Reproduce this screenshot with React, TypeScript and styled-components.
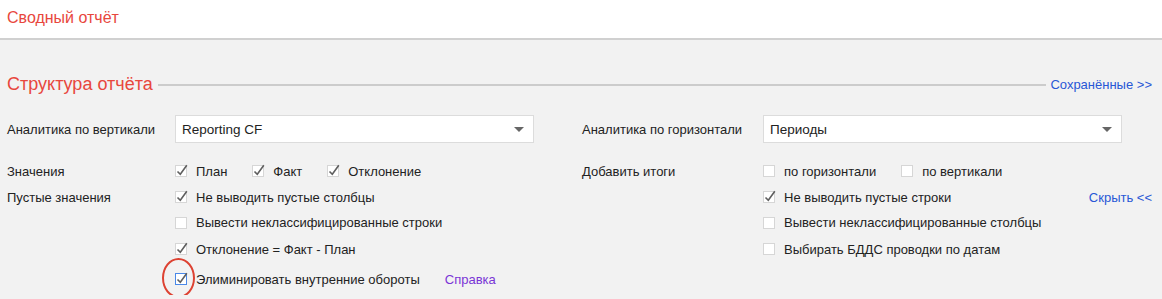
import React from 'react';
import styled, { createGlobalStyle } from 'styled-components';

const GlobalStyle = createGlobalStyle`
  body {
    margin: 0;
    background: #f2f2f2;
    font-family: "Liberation Sans", Arial, sans-serif;
    font-size: 13px;
    color: #222;
  }
`;

const Header = styled.header`
  height: 40px;
  box-sizing: border-box;
  background: #fff;
  border-bottom: 2px solid #d0d0d0;
  display: flex;
  align-items: center;
  padding: 0 7px;
`;

const PageTitle = styled.h1`
  margin: 0 0 3px;
  font-size: 16px;
  font-weight: normal;
  color: #e8473d;
`;

const Body = styled.main`
  padding: 33px 10px 0 7px;
`;

const Legend = styled.div`
  display: flex;
  align-items: center;
  height: 22px;
`;

const SectionTitle = styled.h2`
  margin: 0;
  font-size: 18px;
  font-weight: normal;
  color: #e8473d;
`;

const Rule = styled.div`
  flex: 1;
  height: 2px;
  background: #cccccc;
  margin: 2px 4px 0 5px;
`;

const Link = styled.a<{ $visited?: boolean }>`
  color: ${(p) => (p.$visited ? '#7a35d6' : '#2857d6')};
  text-decoration: none;
  cursor: pointer;
  white-space: nowrap;
`;

const Grid = styled.div`
  display: grid;
  grid-template-columns: 168px 407px 181px 1fr;
  grid-template-rows: 43px 26px 26px 25px 28px 32px;
  margin-top: 20px;
`;

const Label = styled.div<{ $top?: boolean }>`
  display: flex;
  align-items: center;
  align-self: ${(p) => (p.$top ? 'start' : 'stretch')};
  height: ${(p) => (p.$top ? '28px' : 'auto')};
`;

const Controls = styled.div<{ $spread?: boolean; $top?: boolean }>`
  display: flex;
  align-items: center;
  gap: 25px;
  align-self: ${(p) => (p.$top ? 'start' : 'stretch')};
  justify-content: ${(p) => (p.$spread ? 'space-between' : 'flex-start')};
`;

const Select = styled.div`
  width: 359px;
  height: 28px;
  box-sizing: border-box;
  background: #fff;
  border: 1px solid #dcdcdc;
  display: flex;
  align-items: center;
  justify-content: space-between;
  padding: 0 9px 0 6px;
  font-size: 13.5px;
`;

const Arrow = styled.span`
  width: 0;
  height: 0;
  border-left: 5px solid transparent;
  border-right: 5px solid transparent;
  border-top: 5px solid #666;
`;

const Item = styled.label`
  position: relative;
  display: inline-flex;
  align-items: center;
  white-space: nowrap;
`;

const Box = styled.span<{ $focus?: boolean }>`
  position: relative;
  width: 12px;
  height: 12px;
  box-sizing: border-box;
  background: #fff;
  border: 1px solid ${(p) => (p.$focus ? '#4a88e8' : '#d6d6d6')};
  margin-right: 9px;
  flex: none;

  svg {
    position: absolute;
    left: 0;
    top: -2px;
    overflow: visible;
  }
`;

const Mark = styled.span`
  position: absolute;
  left: -13px;
  top: 50%;
  width: 33px;
  height: 40px;
  margin-top: -21px;
  box-sizing: border-box;
  border: 2.5px solid #dd4232;
  border-radius: 50%;
  pointer-events: none;
`;

const Check: React.FC<{ checked?: boolean; focus?: boolean; circled?: boolean; children: React.ReactNode }> = ({
  checked,
  focus,
  circled,
  children,
}) => (
  <Item>
    <Box $focus={focus}>
      {checked && (
        <svg width="12" height="13" viewBox="0 0 12 13">
          <path d="M1.5 7.5 L4.3 10.3 L10.8 1.2" fill="none" stroke="#5f5f5f" strokeWidth="1.6" />
        </svg>
      )}
    </Box>
    {children}
    {circled && <Mark />}
  </Item>
);

export default function App() {
  return (
    <>
      <GlobalStyle />
      <Header>
        <PageTitle>Сводный отчёт</PageTitle>
      </Header>
      <Body>
        <Legend>
          <SectionTitle>Структура отчёта</SectionTitle>
          <Rule />
          <Link>Сохранённые &gt;&gt;</Link>
        </Legend>
        <Grid>
          <Label $top>Аналитика по вертикали</Label>
          <Controls $top>
            <Select>
              Reporting CF
              <Arrow />
            </Select>
          </Controls>
          <Label $top>Аналитика по горизонтали</Label>
          <Controls $top>
            <Select>
              Периоды
              <Arrow />
            </Select>
          </Controls>

          <Label>Значения</Label>
          <Controls>
            <Check checked>План</Check>
            <Check checked>Факт</Check>
            <Check checked>Отклонение</Check>
          </Controls>
          <Label>Добавить итоги</Label>
          <Controls>
            <Check>по горизонтали</Check>
            <Check>по вертикали</Check>
          </Controls>

          <Label>Пустые значения</Label>
          <Controls>
            <Check checked>Не выводить пустые столбцы</Check>
          </Controls>
          <Label />
          <Controls $spread>
            <Check checked>Не выводить пустые строки</Check>
            <Link>Скрыть &lt;&lt;</Link>
          </Controls>

          <Label />
          <Controls>
            <Check>Вывести неклассифицированные строки</Check>
          </Controls>
          <Label />
          <Controls>
            <Check>Вывести неклассифицированные столбцы</Check>
          </Controls>

          <Label />
          <Controls>
            <Check checked>Отклонение = Факт - План</Check>
          </Controls>
          <Label />
          <Controls>
            <Check>Выбирать БДДС проводки по датам</Check>
          </Controls>

          <Label />
          <Controls>
            <Check checked focus circled>
              Элиминировать внутренние обороты
            </Check>
            <Link $visited>Справка</Link>
          </Controls>
        </Grid>
      </Body>
    </>
  );
}
